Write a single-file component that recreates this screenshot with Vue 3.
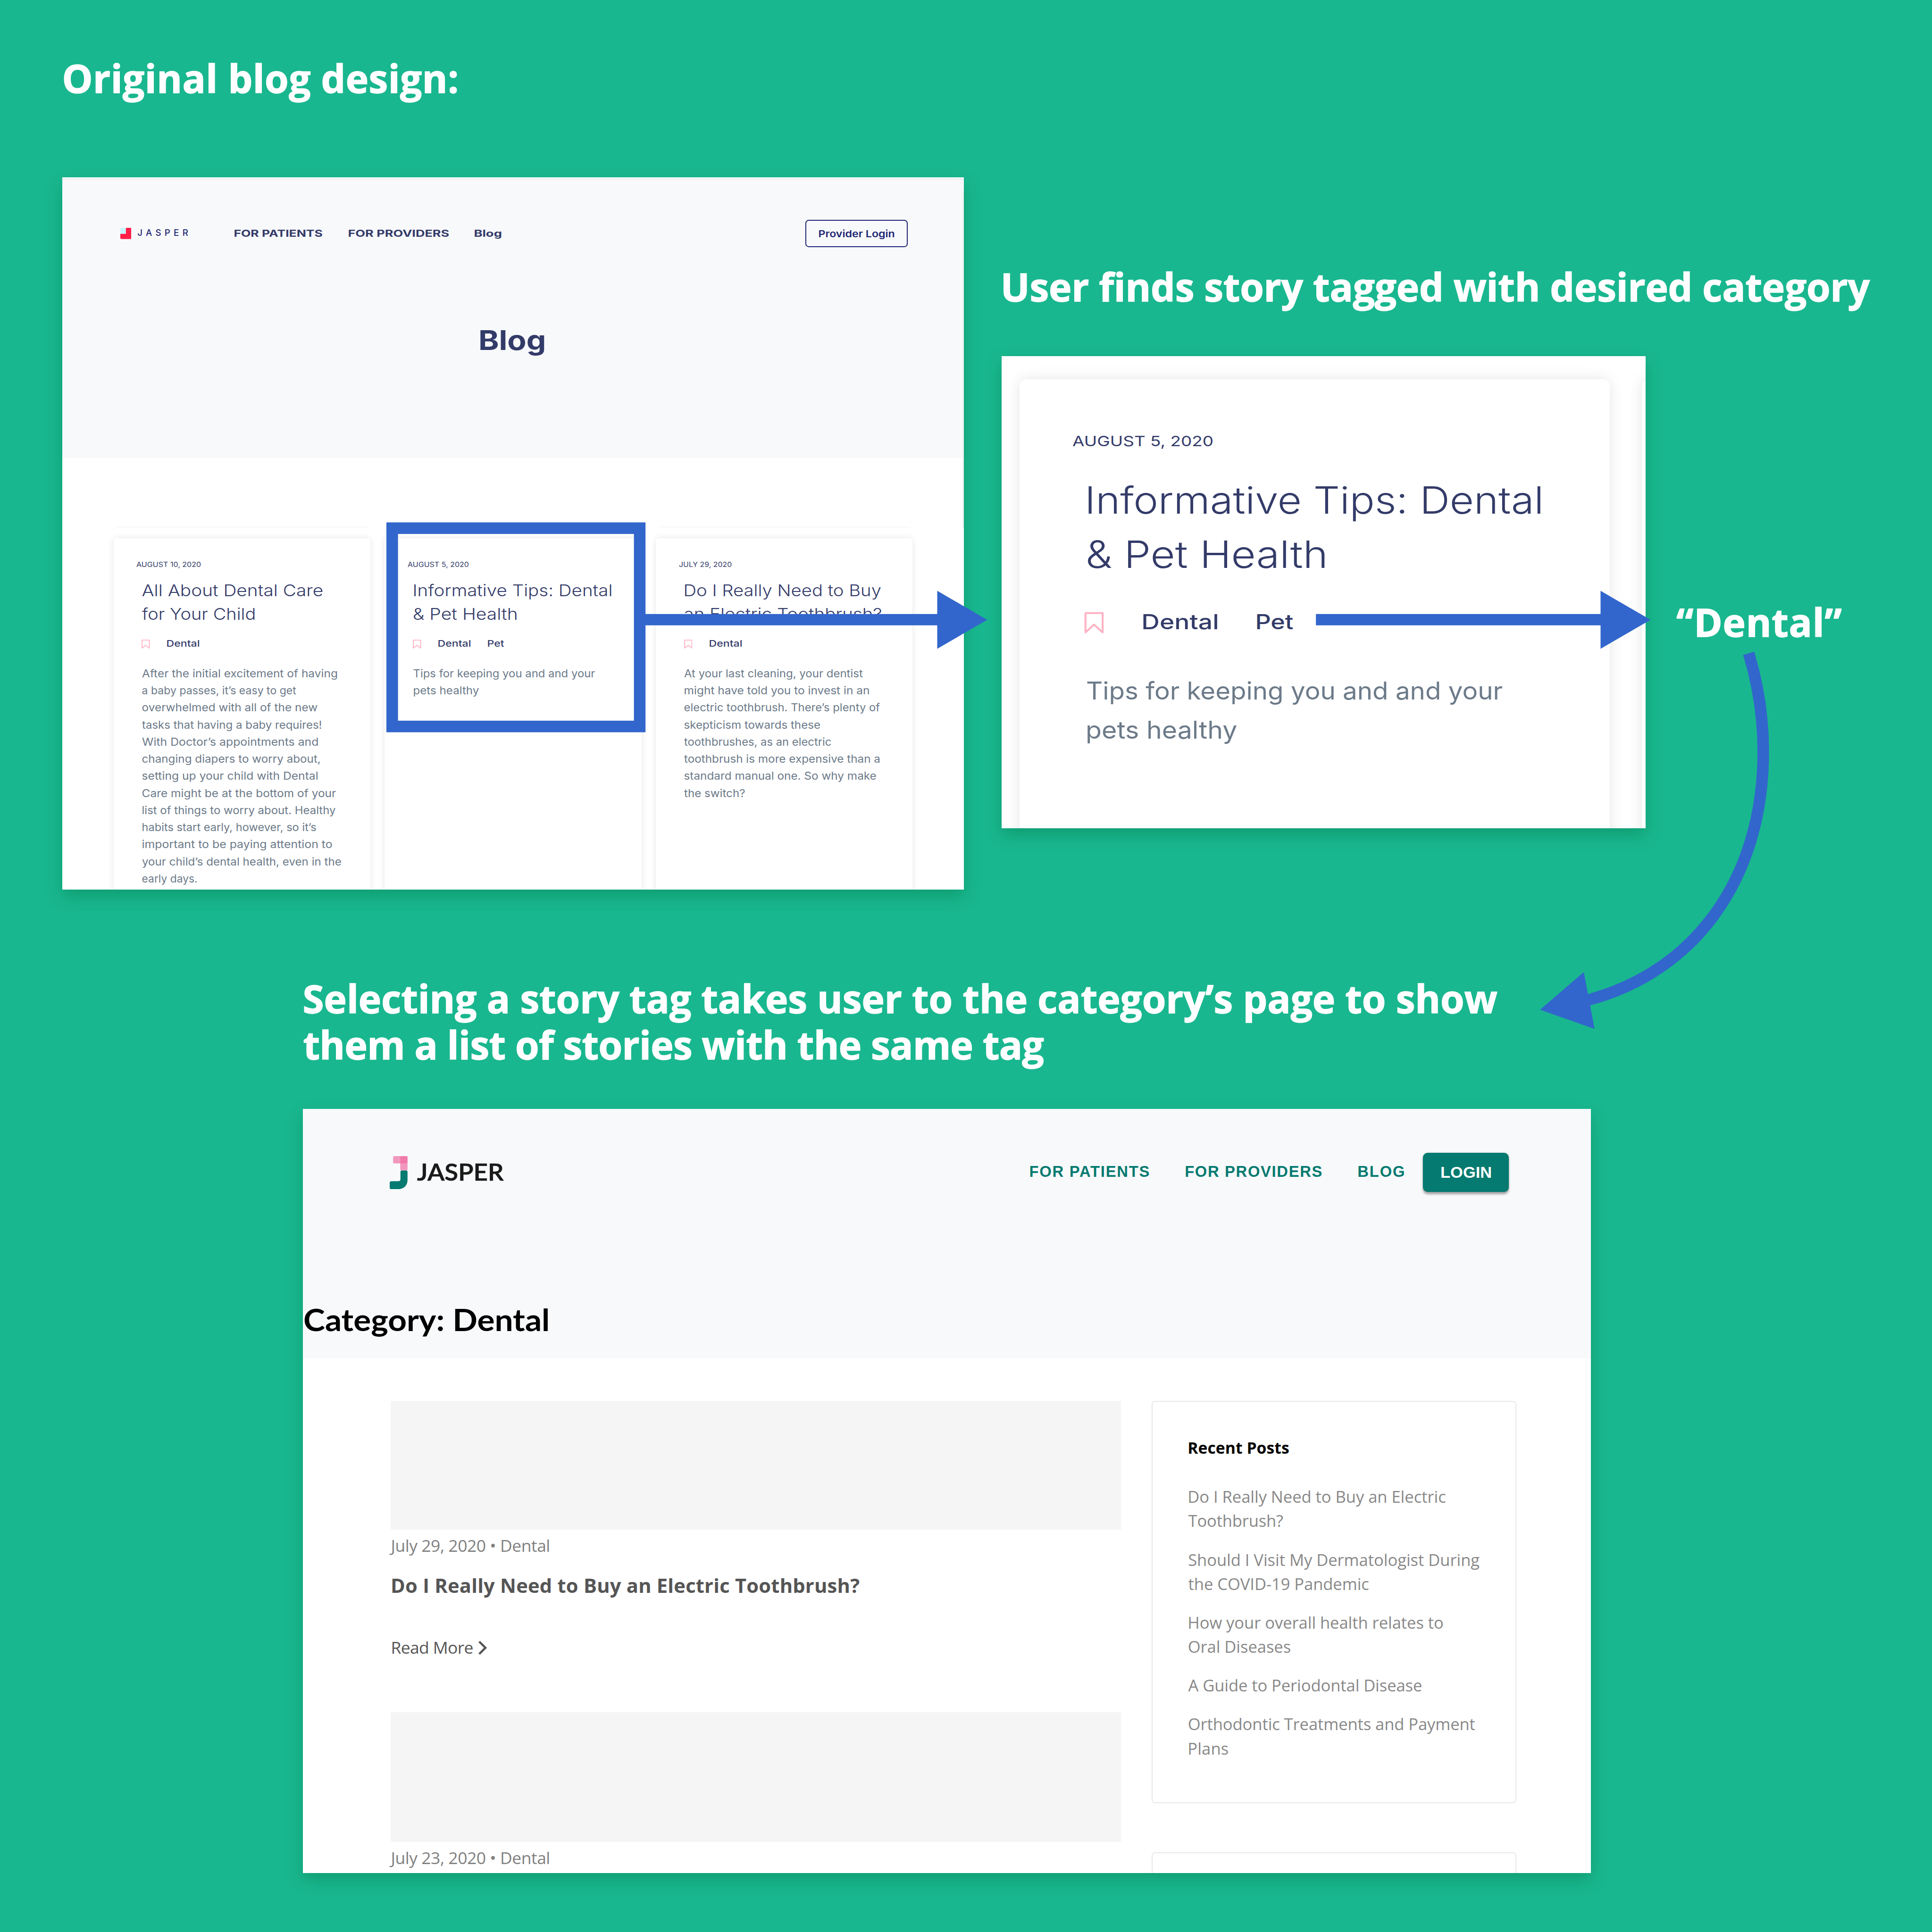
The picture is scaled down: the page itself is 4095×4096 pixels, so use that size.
<script setup>
// Sets a line of text to an exact width, by tracking or, with the `stretch`
// modifier, by widening the glyphs.
const ctx = document.createElement('canvas').getContext('2d')

const vFit = {
  mounted(el, { value, modifiers }) {
    const cs = getComputedStyle(el)
    const text = el.textContent.trim()
    ctx.font = `${cs.fontWeight} ${cs.fontSize} ${cs.fontFamily}`
    const m = ctx.measureText(text)
    const indent = Math.min(0, m.actualBoundingBoxLeft / 2)
    const end = indent + m.actualBoundingBoxRight
    el.style.width = `${value}px`
    el.style.textIndent = `${indent}px`
    if (modifiers.stretch) {
      el.style.transform = `scaleX(${value / end})`
    } else {
      el.style.letterSpacing = `${(value - end) / (text.length - 1)}px`
    }
  },
}

const cards = [
  {
    date: ['AUGUST 10, 2020', 150],
    title: [['All About Dental Care', 421], ['for Your Child', 262]],
    tags: [['Dental', 76]],
    body: [
      ['After the initial excitement of having', 454.5],
      ['a baby passes, it’s easy to get', 359],
      ['overwhelmed with all of the new', 408.5],
      ['tasks that having a baby requires!', 418],
      ['With Doctor’s appointments and', 410],
      ['changing diapers to worry about,', 415],
      ['setting up your child with Dental', 409.5],
      ['Care might be at the bottom of your', 451.5],
      ['list of things to worry about. Healthy', 451],
      ['habits start early, however, so it’s', 405],
      ['important to be paying attention to', 442.5],
      ['your child’s dental health, even in the', 464],
      ['early days.', 128],
    ],
  },
  {
    date: ['AUGUST 5, 2020', 142],
    title: [['Informative Tips: Dental', 461], ['& Pet Health', 241]],
    tags: [['Dental', 76], ['Pet', 39]],
    body: [['Tips for keeping you and and your', 423], ['pets healthy', 153]],
  },
  {
    date: ['JULY 29, 2020', 122.5],
    title: [['Do I Really Need to Buy', 458], ['an Electric Toothbrush?', 460]],
    tags: [['Dental', 76]],
    body: [
      ['At your last cleaning, your dentist', 416],
      ['might have told you to invest in an', 430.5],
      ['electric toothbrush. There’s plenty of', 456],
      ['skepticism towards these', 317],
      ['toothbrushes, as an electric', 343],
      ['toothbrush is more expensive than a', 456],
      ['standard manual one. So why make', 447.5],
      ['the switch?', 141.5],
    ],
  },
]

const closeUp = {
  date: ['AUGUST 5, 2020', 327.5],
  title: [['Informative Tips: Dental', 1058], ['& Pet Health', 555]],
  tags: [['Dental', 175], ['Pet', 87]],
  body: [['Tips for keeping you and and your', 969], ['pets healthy', 350]],
}

const recent = [
  [['Do I Really Need to Buy an Electric', 599], ['Toothbrush?', 221]],
  [['Should I Visit My Dermatologist During', 678], ['the COVID-19 Pandemic', 420]],
  [['How your overall health relates to', 593], ['Oral Diseases', 238]],
  [['A Guide to Periodontal Disease', 543.5]],
  [['Orthodontic Treatments and Payment', 668], ['Plans', 93]],
]
</script>

<template>
  <main class="board">
    <h2 class="caption c-original"><span v-fit="917" class="line">Original blog design:</span></h2>

    <section class="panel blog">
      <div class="topbar"></div>
      <header class="blog-head">
        <nav class="blog-nav">
          <svg class="mark" viewBox="0 0 26 26">
            <rect width="20" height="20" rx="2" fill="#c9f5fc" />
            <path d="M13 2a2 2 0 0 1 2-2h9a2 2 0 0 1 2 2v22a2 2 0 0 1-2 2H2a2 2 0 0 1-2-2V14h13z" fill="#ff2047" />
          </svg>
          <span v-fit="118" class="line brand">JASPER</span>
          <span v-fit.stretch="206" class="line link">FOR PATIENTS</span>
          <span v-fit.stretch="235" class="line link">FOR PROVIDERS</span>
          <span v-fit.stretch="63.5" class="line link">Blog</span>
          <span class="provider"><span v-fit.stretch="177" class="line">Provider Login</span></span>
        </nav>
        <h1 class="blog-title"><span v-fit.stretch="151" class="line">Blog</span></h1>
      </header>
      <div class="cards">
        <article v-for="card in cards" :key="card.date[0]" class="card">
          <div class="date"><span v-fit.stretch="card.date[1]" class="line">{{ card.date[0] }}</span></div>
          <div class="title">
            <span v-for="l in card.title" :key="l[0]" v-fit.stretch="l[1]" class="line">{{ l[0] }}</span>
          </div>
          <div class="tags">
            <svg class="bookmark" viewBox="0 0 46 51" preserveAspectRatio="none">
              <path d="M3 3H43V48L23 32L3 48Z" fill="none" stroke="#ffb3c3" stroke-width="5" stroke-linejoin="round" />
            </svg>
            <span v-for="t in card.tags" :key="t[0]" v-fit.stretch="t[1]" class="line">{{ t[0] }}</span>
          </div>
          <div class="body">
            <span v-for="l in card.body" :key="l[0]" v-fit.stretch="l[1]" class="line">{{ l[0] }}</span>
          </div>
        </article>
      </div>
      <div class="scrollbar"></div>
    </section>

    <h2 class="caption c-finds"><span v-fit="2022" class="line">User finds story tagged with desired category</span></h2>

    <section class="panel closeup">
      <article class="card large">
        <div class="date"><span v-fit.stretch="closeUp.date[1]" class="line">{{ closeUp.date[0] }}</span></div>
        <div class="title">
          <span v-for="l in closeUp.title" :key="l[0]" v-fit.stretch="l[1]" class="line">{{ l[0] }}</span>
        </div>
        <div class="tags">
          <svg class="bookmark" viewBox="0 0 46 51">
            <path d="M3 3H43V48L23 30L3 48Z" fill="none" stroke="#ffb3c3" stroke-width="4.5" stroke-linejoin="round" />
          </svg>
          <span v-for="t in closeUp.tags" :key="t[0]" v-fit.stretch="t[1]" class="line">{{ t[0] }}</span>
        </div>
        <div class="body">
          <span v-for="l in closeUp.body" :key="l[0]" v-fit.stretch="l[1]" class="line">{{ l[0] }}</span>
        </div>
      </article>
      <article class="card large next"></article>
    </section>

    <h2 class="caption c-dental"><span v-fit="384" class="line">“Dental”</span></h2>

    <h2 class="caption c-select">
      <span v-fit="2781" class="line">Selecting a story tag takes user to the category’s page to show</span>
      <span v-fit="1724" class="line">them a list of stories with the same tag</span>
    </h2>

    <section class="panel category">
      <header class="cat-head">
        <nav class="cat-nav">
          <svg class="cat-mark" viewBox="0 0 41.5 77">
            <rect x="8" y="0" width="33.5" height="17" rx="3" fill="#f06ea2" fill-opacity=".7" />
            <rect x="24.5" y="0" width="17" height="33.5" rx="3" fill="#f06ea2" fill-opacity=".7" />
            <path d="M28.500 33.500H38.500A3 3 0 0 1 41.500 36.500V56C41.500 69 32 77 20 77H4A4 4 0 0 1 0 73V62A4 4 0 0 1 4 58.500H20C23 58.500 25 57 25 54V37A3.500 3.500 0 0 1 28.500 33.500Z" fill="#047a70" />
          </svg>
          <span v-fit.stretch="201.7" class="line cat-brand">JASPER</span>
          <span v-fit="278" class="line cat-link">FOR PATIENTS</span>
          <span v-fit="318" class="line cat-link">FOR PROVIDERS</span>
          <span v-fit="107.2" class="line cat-link">BLOG</span>
          <span class="login"><span v-fit.stretch="117" class="line">LOGIN</span></span>
        </nav>
        <h1 class="cat-title"><span v-fit.stretch="569" class="line">Category: Dental</span></h1>
      </header>
      <div class="cat-content">
        <div class="posts">
          <div class="thumb"></div>
          <div class="meta"><span v-fit="368.5" class="line">July 29, 2020 • Dental</span></div>
          <h3 class="post-title"><span v-fit="1090" class="line">Do I Really Need to Buy an Electric Toothbrush?</span></h3>
          <div class="more">
            <span v-fit="189" class="line">Read More</span>
            <svg class="chevron" viewBox="0 0 21 34">
              <path d="M3 2.500L17.500 17L3 31.500" fill="none" stroke="#555" stroke-width="5" />
            </svg>
          </div>
          <div class="thumb second"></div>
          <div class="meta second"><span v-fit="368.5" class="line">July 23, 2020 • Dental</span></div>
        </div>
        <aside class="side">
          <div class="widget">
            <h4 class="widget-title"><span v-fit="234" class="line">Recent Posts</span></h4>
            <ul class="recent">
              <li v-for="(item, i) in recent" :key="i">
                <span v-for="l in item" :key="l[0]" v-fit="l[1]" class="line">{{ l[0] }}</span>
              </li>
            </ul>
          </div>
          <div class="widget"></div>
        </aside>
      </div>
    </section>

    <svg class="arrows" viewBox="0 0 4500 4501">
      <rect x="913.500" y="1230.500" width="576.500" height="462" fill="none" stroke="#3266cc" stroke-width="27" />
      <path d="M1503 1430.500H2183V1376.500L2299.500 1444L2183 1511.500V1457H1503Z" />
      <path d="M3065 1430.500H3728V1376.500L3844.500 1444L3728 1511.500V1457H3065Z" />
      <path d="M4073 1522C4095 1595 4107 1672 4107 1751C4107 2050 3945 2265 3698 2330" fill="none" stroke="#3266cc" stroke-width="27" />
      <path d="M3689 2264.500L3714 2397L3587 2352.500Z" />
    </svg>
  </main>
</template>

<style>
html,
body {
  margin: 0;
  background: #19b78f;
}
</style>

<style scoped>
/* Dimensions are in the board's own 4500 × 4501 units. */
.board {
  zoom: 0.91;
  position: relative;
  width: 4500px;
  height: 4501px;
  overflow: hidden;
  background: #19b78f;
  font-family: Inter, 'Open Sans', sans-serif;
}
h1, h2, h3, h4, ul {
  margin: 0;
  padding: 0;
  font-size: inherit;
  list-style: none;
}
.line {
  display: block;
  flex: none;
  white-space: nowrap;
  font-variant-ligatures: none;
  transform-origin: 0 50%;
}

.caption {
  position: absolute;
  color: #fff;
  font: 700 90px/108px 'Open Sans', sans-serif;
  -webkit-text-stroke: 1.500px #fff;
}
.c-original { left: 147px; top: 128px; }
.c-finds { left: 2334px; top: 613px; }
.c-dental { left: 3905px; top: 1394px; }
.c-select { left: 707px; top: 2271px; }

.panel {
  position: absolute;
  overflow: hidden;
  background: #fff;
  box-shadow: 0 17px 34px rgba(0, 115, 65, 0.38);
}
.blog { left: 145px; top: 413px; width: 2100px; height: 1660px; }
.closeup { left: 2333px; top: 830px; width: 1500px; height: 1100px; }
.category { left: 705px; top: 2583px; width: 3000px; height: 1781px; }

.topbar {
  height: 4px;
  border-bottom: 1px solid #d3d6da;
}
.blog-head {
  box-sizing: border-box;
  height: 649px;
  padding: 94px 131px 0 135px;
  background: #f8f9fb;
  color: #333b69;
}
.blog-nav {
  display: flex;
  align-items: center;
  height: 64px;
}
.mark { width: 26px; height: 26px; }
.brand {
  margin: -3px 107px 0 14px;
  color: #1d2671;
  font-size: 20.6px;
  font-weight: 500;
}
.link {
  margin-right: 59.500px;
  font-size: 22px;
  font-weight: 700;
}
.provider {
  display: flex;
  align-items: center;
  justify-content: center;
  box-sizing: border-box;
  width: 238px;
  height: 64px;
  margin-left: auto;
  border: 2.500px solid #1d2671;
  border-radius: 8px;
  color: #1d2671;
  font-size: 22.500px;
  font-weight: 600;
}
.blog-title {
  margin: 178.500px 0 0 837px;
  font-size: 63px;
  font-weight: 700;
  line-height: 76px;
}
.cards {
  display: flex;
  gap: 33.500px;
  padding: 186.500px 0 0 119.500px;
}
.card {
  position: relative;
  flex: none;
  box-sizing: border-box;
  width: 598px;
  height: 900px;
  padding: 52px 0 0 66.500px;
  border-radius: 8px;
  background: #fff;
  box-shadow: 0 0 14px rgba(0, 0, 0, 0.1);
  color: #333b69;
}
.card::before {
  content: '';
  position: absolute;
  left: 6px;
  right: 6px;
  top: -27px;
  height: 3px;
  background: #fafafa;
}
.date {
  margin-left: -13px;
  font-size: 15.500px;
  line-height: 20px;
}
.title {
  margin-top: 22.500px;
  font-size: 38px;
  font-weight: 300;
  line-height: 55.600px;
}
.tags {
  display: flex;
  gap: 39px;
  margin: 29px 0 0 -1px;
  font-size: 21px;
  font-weight: 500;
  line-height: 24px;
}
.bookmark {
  width: 19.500px;
  height: 21px;
  margin-top: 2px;
}
.body {
  margin-top: 37px;
  color: #6c7a89;
  font-size: 25px;
  line-height: 39.840px;
}
.scrollbar {
  position: absolute;
  right: 0;
  top: 32px;
  width: 3px;
  height: 785px;
  background: #f1f1f1;
}

.closeup {
  display: flex;
  gap: 75px;
  box-sizing: border-box;
  padding: 53.500px 0 0 41.500px;
}
.large {
  width: 1374.500px;
  height: 1200px;
  padding: 123.800px 0 0 156.500px;
  border-radius: 16px;
  box-shadow: 0 0 34px rgba(0, 0, 0, 0.1);
}
.large::before { display: none; }
.large .date {
  margin-left: -33px;
  font-size: 33.500px;
  line-height: 40px;
}
.large .title {
  margin-top: 54.400px;
  font-size: 87.500px;
  line-height: 127px;
}
.large .tags {
  gap: 89.500px;
  margin: 67.400px 0 0 -5.500px;
  font-size: 48px;
  line-height: 52px;
}
.large .bookmark {
  width: 46px;
  height: 51px;
}
.large .body {
  margin-top: 88.900px;
  font-size: 57px;
  line-height: 91.100px;
}

.cat-head {
  box-sizing: border-box;
  height: 582px;
  padding-top: 103px;
  background: #f8f9fb;
}
.cat-nav {
  display: flex;
  align-items: center;
  height: 91px;
  padding: 0 191px 0 203px;
}
.cat-mark { width: 41.500px; height: 77px; }
.cat-brand {
  margin: -3px auto 0 21.500px;
  color: #1a1a1a;
  font: 600 55px/66px Lato, sans-serif;
  -webkit-text-stroke: 0.800px #1a1a1a;
}
.cat-link {
  margin: -3px 84.300px 0 0;
  color: #047a70;
  font: 700 36px/44px 'Liberation Sans', sans-serif;
}
.cat-link:nth-last-child(2) { margin-right: 44.500px; }
.login {
  display: flex;
  align-items: center;
  justify-content: center;
  width: 199.500px;
  height: 91px;
  border-radius: 11px;
  background: #047a70;
  box-shadow: 0 5px 5px rgba(0, 0, 0, 0.32), 0 0 4px rgba(0, 0, 0, 0.15);
  color: #fff;
  font: 700 35.700px/44px 'Liberation Sans', sans-serif;
}
.cat-title {
  margin: 253.500px 0 0 3px;
  color: #000;
  font: 700 71px/86px Lato, sans-serif;
}
.cat-content {
  display: flex;
  gap: 71px;
  padding: 99px 0 0 205.400px;
  font-family: 'Open Sans', sans-serif;
}
.posts { width: 1700.600px; }
.thumb {
  height: 300.300px;
  background: #f5f5f5;
}
.meta {
  margin-top: 12.600px;
  color: #808080;
  font-size: 39px;
  line-height: 48px;
}
.post-title {
  margin: 41.100px 0 0 1.500px;
  color: #555;
  font-size: 45.800px;
  font-weight: 700;
  line-height: 56px;
}
.more {
  display: flex;
  gap: 12px;
  margin: 91.900px 0 0 1.500px;
  color: #555;
  font-size: 39px;
  line-height: 48px;
}
.chevron {
  width: 21px;
  height: 34px;
  margin-top: 8px;
}
.thumb.second {
  height: 302px;
  margin-top: 127.100px;
}
.meta.second { margin-top: 13.900px; }
.side { width: 850px; }
.widget {
  box-sizing: border-box;
  height: 937px;
  margin-bottom: 114px;
  padding: 82px 0 0 83.500px;
  border: 2.500px solid #e8e8e8;
  border-radius: 8px;
}
.widget-title {
  color: #000;
  font-size: 37px;
  font-weight: 700;
  line-height: 50px;
}
.recent {
  display: flex;
  flex-direction: column;
  gap: 34px;
  margin-top: 60.200px;
  color: #888;
  font-size: 38px;
  line-height: 56.300px;
}

.arrows {
  position: absolute;
  left: 0;
  top: 0;
  width: 4500px;
  height: 4501px;
  fill: #3266cc;
}
</style>
